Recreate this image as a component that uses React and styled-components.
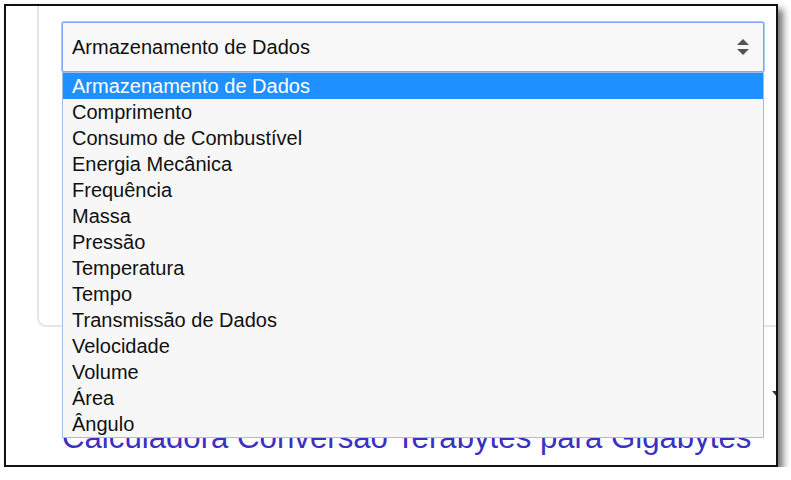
import styled, { createGlobalStyle } from "styled-components"

const GlobalStyle = createGlobalStyle`
    html, body {
        margin: 0;
        padding: 0;
        background: #ffffff;
    }
    * { box-sizing: border-box; }
`

const Frame = styled.div`
    margin: 4px 0 0 4px;
    width: 774px;
    height: 463px;
    border: 2px solid #111;
    background: #fff;
    overflow: hidden;
    position: relative;
    box-shadow: 5px 5px 7px rgba(0, 0, 0, 0.55);
    font-family: "Liberation Sans", Arial, sans-serif;
`

const Page = styled.div`
    padding-left: 31px;
    margin-right: -60px;
`

const Card = styled.div`
    height: 321px;
    border: 2px solid #e4e4e4;
    border-top: none;
    border-radius: 0 0 0 9px;
    padding: 16px 0 0 23px;
`

const SelectWrap = styled.div`
    position: relative;
    width: 702px;
`

const SelectBox = styled.div`
    height: 50px;
    display: flex;
    align-items: center;
    justify-content: space-between;
    padding: 0 14px 0 9px;
    background: #f8f8f8;
    border: 1px solid #7aa9f2;
    box-shadow: 0 0 0 1px #a9c8f6;
    border-radius: 2px;
    font-size: 20px;
    color: #111;
`

const Arrows = styled.span`
    display: flex;
    flex-direction: column;
    gap: 4px;
`

const Tri = styled.span`
    width: 0;
    height: 0;
    border-left: 6px solid transparent;
    border-right: 6px solid transparent;
    ${(p) => p.$up
        ? "border-bottom: 6px solid #555;"
        : "border-top: 6px solid #555;"}
`

const List = styled.ul`
    position: absolute;
    top: 100%;
    left: 0;
    width: 702px;
    margin: 0;
    padding: 0;
    list-style: none;
    background: #f7f7f7;
    border: 1px solid #a3bde6;
    z-index: 10;
`

const Item = styled.li`
    height: 26px;
    line-height: 26px;
    padding-left: 9px;
    font-size: 20px;
    color: ${(p) => (p.$active ? "#fff" : "#111")};
    background: ${(p) => (p.$active ? "#1e90ff" : "transparent")};
    white-space: nowrap;
`

const BelowRow = styled.div`
    margin: 53px 0 0 25px;
    width: 716px;
    height: 28px;
    display: flex;
    align-items: center;
    justify-content: space-between;
`

const Label = styled.span`
    color: #e08a2c;
    font-size: 18px;
`

const DownTri = styled.span`
    width: 0;
    height: 0;
    border-left: 5px solid transparent;
    border-right: 5px solid transparent;
    border-top: 6px solid #333;
    margin-right: -4px;
`

const TitleLink = styled.a`
    display: block;
    margin: 12px 0 0 25px;
    font-size: 31.2px;
    line-height: 36px;
    color: #3a30c2;
    text-decoration: none;
    white-space: nowrap;
`

const categorias = [
    "Armazenamento de Dados",
    "Comprimento",
    "Consumo de Combustível",
    "Energia Mecânica",
    "Frequência",
    "Massa",
    "Pressão",
    "Temperatura",
    "Tempo",
    "Transmissão de Dados",
    "Velocidade",
    "Volume",
    "Área",
    "Ângulo",
]

function App() {
    return (
        <>
            <GlobalStyle />
            <Frame>
                <Page>
                    <Card>
                        <SelectWrap>
                            <SelectBox>
                                <span>{categorias[0]}</span>
                                <Arrows>
                                    <Tri $up />
                                    <Tri />
                                </Arrows>
                            </SelectBox>
                            <List>
                                {categorias.map((c, i) => (
                                    <Item key={c} $active={i === 0}>{c}</Item>
                                ))}
                            </List>
                        </SelectWrap>
                    </Card>
                    <BelowRow>
                        <Label>(</Label>
                        <DownTri />
                    </BelowRow>
                    <TitleLink href="#">Calculadora Conversão Terabytes para Gigabytes</TitleLink>
                </Page>
            </Frame>
        </>
    )
}

export default App
